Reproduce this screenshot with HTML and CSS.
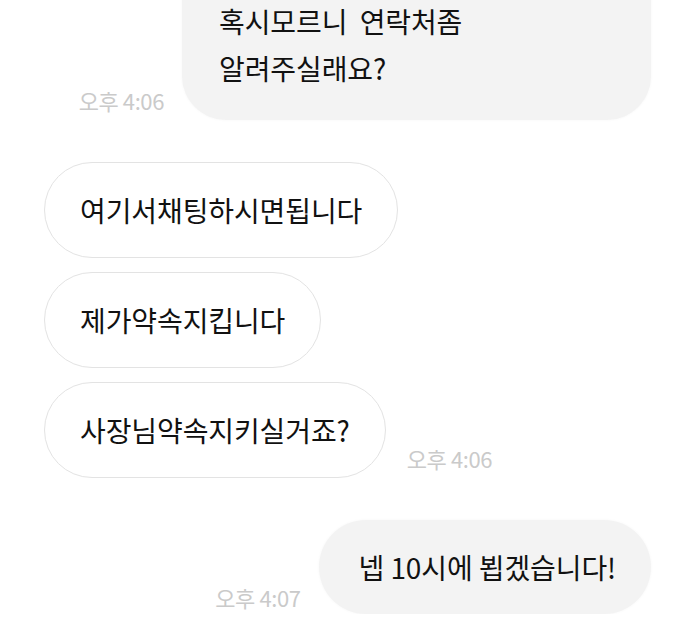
FILE: index.html
```html
<!DOCTYPE html>
<html>
<head>
    <title>채팅</title>
    <link rel="stylesheet" href="styles.css">
</head>
<body>
    <div class="chat">
        <div class="row row-sent">
            <span class="time">오후 4:06</span>
            <div class="bubble bubble-sent bubble-first">혹시모르니&nbsp; 연락처좀<br>알려주실래요?</div>
        </div>

        <div class="group">
            <div class="row">
                <div class="bubble bubble-recv">여기서채팅하시면됩니다</div>
            </div>
            <div class="row">
                <div class="bubble bubble-recv">제가약속지킵니다</div>
            </div>
            <div class="row">
                <div class="bubble bubble-recv">사장님약속지키실거죠?</div>
                <span class="time">오후 4:06</span>
            </div>
        </div>

        <div class="row row-sent">
            <span class="time time-last">오후 4:07</span>
            <div class="bubble bubble-sent bubble-last">넵 10시에 뵙겠습니다!</div>
        </div>
    </div>
</body>
</html>
```

FILE: styles.css
```css
/* chat screen */
body {
    margin: 0;
    background: #fff;
    font-family: "Noto Sans CJK KR", "Noto Sans", sans-serif;
    color: #111;
    overflow: hidden;
}

.chat {
    display: flex;
    flex-direction: column;
    gap: 42px;
    padding: 0 49px 0 44px;
    margin-top: -46px;
}

.group {
    display: flex;
    flex-direction: column;
    gap: 14px;
}

.row {
    display: flex;
    align-items: flex-end;
    gap: 21px;
}

.row-sent {
    justify-content: flex-end;
    gap: 18px;
}

.bubble {
    font-size: 28px;
    line-height: 36px;
    padding: 29px 35px;
    border-radius: 48px;
    white-space: nowrap;
    letter-spacing: -0.1px;
}

.bubble-recv {
    background: #fff;
    border: 1.5px solid #e3e3e3;
}

.bubble-sent {
    background: #f3f3f3;
    box-shadow: 0 0 3px rgba(0, 0, 0, 0.04);
}

.bubble-first {
    width: 396px;
    padding: 44px 36px 28px 37px;
    line-height: 47px;
    border-radius: 44px;
}

.bubble-last {
    padding-left: 40px;
}

.time {
    font-size: 22px;
    color: #cacaca;
    letter-spacing: -0.4px;
    margin-bottom: 4px;
    white-space: nowrap;
}

.time-last {
    margin-bottom: 1px;
}
```
